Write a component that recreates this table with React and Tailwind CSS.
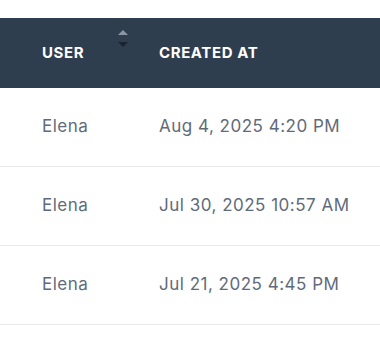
export default function App() {
  const rows = [
    ["Elena", "Aug 4, 2025 4:20 PM"],
    ["Elena", "Jul 30, 2025 10:57 AM"],
    ["Elena", "Jul 21, 2025 4:45 PM"],
  ];
  return (
    <div className="w-[380px] h-[341px] bg-white pt-[18px] overflow-hidden" style={{ fontFamily: "Inter, 'Noto Sans', sans-serif" }}>
      <div className="flex items-center h-[70px] bg-[#2f3e4f] pl-[42px]">
        <div className="w-[117px] flex items-center text-white font-bold text-[15px] tracking-[0.6px] relative h-full">
          <span>USER</span>
          <div className="absolute left-[76px] top-[12px] flex flex-col gap-[7px]">
            <svg width="10" height="5" viewBox="0 0 10 5"><path d="M5 0L10 5H0Z" fill="#8a96a3" /></svg>
            <svg width="10" height="5" viewBox="0 0 10 5"><path d="M0 0H10L5 5Z" fill="#1a2330" /></svg>
          </div>
        </div>
        <div className="text-white font-bold text-[15px] tracking-[0.6px]">CREATED AT</div>
      </div>
      {rows.map((r, i) => (
        <div key={i} className="flex items-center h-[79px] border-b border-[#e8eaed] pl-[42px] text-[17px] tracking-[0.5px] text-[#5f6b7a]">
          <div className="w-[117px]">{r[0]}</div>
          <div>{r[1]}</div>
        </div>
      ))}
    </div>
  );
}
